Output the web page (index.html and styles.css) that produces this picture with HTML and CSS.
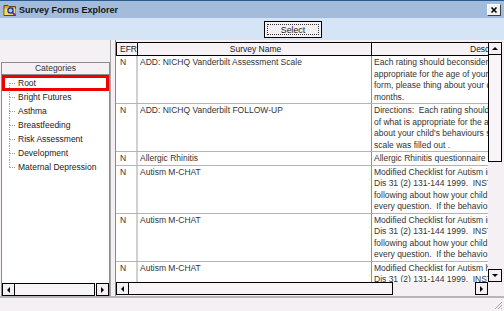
FILE: index.html
```html
<!DOCTYPE html>
<html>
<head>
<meta charset="utf-8">
<link rel="stylesheet" href="styles.css">
</head>
<body>
<div class="window">
  <div class="titlebar">
    <svg class="title-icon" width="14" height="14" viewBox="0 0 14 14">
      <path d="M1 2.5h4l1 1h6.5v9H1z" fill="#d9a826" stroke="#5a4a10" stroke-width="1"/>
      <path d="M1.5 5.5h11v6.5h-11z" fill="#f6dc70"/>
      <circle cx="7.5" cy="7.5" r="2.6" fill="#9cc4f4" stroke="#1c2c8c" stroke-width="1.2"/>
      <path d="M9.4 9.4l3.2 3.2" stroke="#6a2aa8" stroke-width="2"/>
    </svg>
    <span class="title">Survey Forms Explorer</span>
    <span class="close-btn">
      <svg width="8" height="8" viewBox="0 0 8 8"><path d="M1.5 1.5l5 5M6.5 1.5l-5 5" stroke="#000" stroke-width="1.6"/></svg>
    </span>
  </div>
  <div class="toolbar">
    <div class="select-btn"><span class="focus">Select</span></div>
  </div>
  <div class="main">
    <div class="left">
      <div class="cat-panel">
        <div class="cat-head">Categories</div>
        <div class="tree">
          <div class="tree-item root first"><span class="conn"><i></i><i></i></span>Root</div>
          <div class="tree-item"><span class="conn"><i></i><i></i></span>Bright Futures</div>
          <div class="tree-item"><span class="conn"><i></i><i></i></span>Asthma</div>
          <div class="tree-item"><span class="conn"><i></i><i></i></span>Breastfeeding</div>
          <div class="tree-item"><span class="conn"><i></i><i></i></span>Risk Assessment</div>
          <div class="tree-item"><span class="conn"><i></i><i></i></span>Development</div>
          <div class="tree-item last"><span class="conn"><i></i><i></i></span>Maternal Depression</div>
        </div>
        <div class="hscroll small">
          <span class="sbtn arr-left"></span>
          <span class="thumb"></span>
          <span class="track"></span>
          <span class="sbtn arr-right"></span>
        </div>
      </div>
    </div>
    <div class="splitter"></div>
    <div class="right">
      <div class="grid-top">
        <div class="table">
          <div class="row head">
            <div class="cell c1">EFR</div>
            <div class="cell c2">Survey Name</div>
            <div class="cell c3"><span class="desc-head">Description</span></div>
          </div>
          <div class="row l4">
            <div class="cell c1">N</div>
            <div class="cell c2">ADD: NICHQ Vanderbilt Assessment Scale</div>
            <div class="cell c3">Each rating should beconsidered in the context of what is<br>appropriate for the age of your child. When completing this<br>form, please thing about your child's behaviors in the past 6<br>months.</div>
          </div>
          <div class="row l4">
            <div class="cell c1">N</div>
            <div class="cell c2">ADD: NICHQ Vanderbilt FOLLOW-UP</div>
            <div class="cell c3">Directions:&nbsp; Each rating should be considered in the context<br>of what is appropriate for the age of your child. Please think<br>about your child's behaviours since the last assessment<br>scale was filled out .</div>
          </div>
          <div class="row">
            <div class="cell c1">N</div>
            <div class="cell c2">Allergic Rhinitis</div>
            <div class="cell c3">Allergic Rhinitis questionnaire</div>
          </div>
          <div class="row l4">
            <div class="cell c1">N</div>
            <div class="cell c2">Autism M-CHAT</div>
            <div class="cell c3">Modified Checklist for Autism in Toddlers. J Autism Dev<br>Dis 31 (2) 131-144 1999.&nbsp; INSTRUCTIONS: Please fill out the<br>following about how your child usually is. Please try to answer<br>every question.&nbsp; If the behavior is rare, answer as if no.</div>
          </div>
          <div class="row l4">
            <div class="cell c1">N</div>
            <div class="cell c2">Autism M-CHAT</div>
            <div class="cell c3">Modified Checklist for Autism in Toddlers. J Autism Dev<br>Dis 31 (2) 131-144 1999.&nbsp; INSTRUCTIONS: Please fill out the<br>following about how your child usually is. Please try to answer<br>every question.&nbsp; If the behavior is rare, answer as if no.</div>
          </div>
          <div class="row l4">
            <div class="cell c1">N</div>
            <div class="cell c2">Autism M-CHAT</div>
            <div class="cell c3">Modified Checklist for Autism h Toddlers. J Autism Dev<br>Dis 31 (2) 131-144 1999.&nbsp; INSTRUCTIONS: Please fill out the<br>following about how your child usually is.<br>every question.</div>
          </div>
        </div>
        <div class="vscroll">
          <span class="sbtn arr-up"></span>
          <span class="thumb"></span>
          <span class="track"></span>
          <span class="sbtn arr-down"></span>
        </div>
      </div>
      <div class="hscroll big">
        <span class="sbtn arr-left"></span>
        <span class="thumb"></span>
        <span class="track"></span>
        <span class="sbtn arr-right"></span>
        <span class="corner"></span>
      </div>
    </div>
  </div>
  <div class="status">
    <svg class="grip" width="10" height="10" viewBox="0 0 10 10">
      <path d="M9 2L2 9M9 5L5 9M9 8L8 9" stroke="#a8a4a8" stroke-width="1"/>
    </svg>
  </div>
</div>
</body>
</html>
```
FILE: styles.css
```css
* { box-sizing: border-box; margin: 0; padding: 0; }
html, body { width: 504px; height: 311px; overflow: hidden; }
body {
  font-family: "Liberation Sans", Arial, sans-serif;
  font-size: 8.5px;
  color: #222;
  background: #f4f0f4;
}
.window {
  width: 504px;
  height: 311px;
  display: flex;
  flex-direction: column;
  border-top: 1px solid #2b5a8f;
}
.titlebar {
  height: 17px;
  flex: none;
  background: #a3bcdc;
  display: flex;
  align-items: center;
  padding: 0 2px 0 3px;
}
.title-icon { flex: none; margin-right: 2px; }
.title {
  flex: 1;
  font-weight: bold;
  font-size: 9px;
  color: #141414;
}
.close-btn {
  width: 14px;
  height: 12px;
  margin-right: 1px;
  background: #f2f2f2;
  border: 1px solid;
  border-color: #ffffff #404040 #404040 #ffffff;
  display: flex;
  align-items: center;
  justify-content: center;
}
.toolbar {
  height: 22px;
  flex: none;
  background: #d6e5f5;
  padding: 3px 0 0 264px;
}
.select-btn {
  width: 58px;
  height: 17px;
  border: 1px solid #000;
  background: #f4f0f4;
  padding: 2px;
}
.select-btn .focus {
  display: flex;
  height: 100%;
  align-items: center;
  justify-content: center;
  border: 1px dotted #333;
  font-size: 8.8px;
  color: #222;
}
.main {
  flex: 1;
  display: flex;
  min-height: 0;
}
.left {
  width: 110px;
  flex: none;
  padding: 22px 0 0 1px;
  display: flex;
}
.cat-panel {
  flex: 1;
  border: 1px solid #8c8c8c;
  border-bottom: none;
  display: flex;
  flex-direction: column;
}
.cat-head {
  height: 12px;
  flex: none;
  background: #f4f0f4;
  border-bottom: 1px solid #8c8c8c;
  text-align: center;
  line-height: 11px;
  color: #333;
}
.tree {
  flex: 1;
  background: #fff;
  padding-top: 1px;
}
.tree-item {
  height: 14px;
  margin: 0 1px 0 1px;
  display: flex;
  align-items: center;
  color: #222;
}
.tree-item.root {
  outline: 3px solid #ee0000;
  outline-offset: -2px;
}
.conn {
  width: 15px;
  height: 14px;
  flex: none;
  padding-left: 6px;
  display: flex;
  flex-direction: column;
}
.conn i {
  flex: 1;
  width: 6px;
  border-left: 1px dotted #a0a0a0;
}
.conn i + i { border-top: 1px dotted #a0a0a0; }
.tree-item.first .conn i:first-child { border-left-color: transparent; }
.tree-item.last .conn i + i { border-left-color: transparent; }

.splitter {
  width: 5px;
  flex: none;
  border-left: 1px solid #a8a8a8;
}
.right {
  flex: 1;
  display: flex;
  flex-direction: column;
  padding: 2px 2px 1px 0;
  border-left: 1px solid #8a8a8a;
  min-width: 0;
}
.grid-top {
  flex: 1;
  display: flex;
  min-height: 0;
  overflow: hidden;
}
.table {
  width: 372px;
  flex: none;
  overflow: hidden;
  background: #fff;
}
.row {
  display: grid;
  grid-template-columns: 22px 234px 116px;
  border-bottom: 1px solid #b4b4b4;
  line-height: 11.5px;
}
.row.head {
  background: #f6f2f6;
  height: 14px;
  border-top: 1px solid #000;
  border-bottom: 1px solid #000;
  line-height: 12px;
}
.cell {
  padding: 1px 0 0 2px;
  white-space: nowrap;
  overflow: hidden;
  color: #333;
}
.row .c1 { padding-left: 4px; border-right: 2px solid #d0d0d0; }
.row .c2 { border-right: 1px solid #909090; }
.row.head .cell { padding-top: 0; color: #222; }
.row.head .c1 { border-left: 1px solid #000; border-right: 1px solid #000; padding-left: 3px; }
.row.head .c2 { border-right: 1px solid #000; text-align: center; }
.row.head .c3 { padding-left: 98px; }

.vscroll {
  width: 14px;
  flex: none;
  display: flex;
  flex-direction: column;
  background: #f4f0f4;
}
.sbtn {
  flex: none;
  border: 1px solid #000;
  background: #f4f0f4;
  display: flex;
  align-items: center;
  justify-content: center;
}
.sbtn::before {
  content: "";
  width: 0;
  height: 0;
  border: 3px solid transparent;
}
.vscroll .sbtn { height: 13px; }
.arr-up::before { border-bottom: 3px solid #000; border-top-width: 0; }
.arr-down::before { border-top: 3px solid #000; border-bottom-width: 0; }
.arr-left::before { border-right: 3px solid #000; border-left-width: 0; }
.arr-right::before { border-left: 3px solid #000; border-right-width: 0; }
.thumb {
  flex: none;
  border: 1px solid #000;
  background: #f8f4f8;
}
.vscroll .thumb { height: 108px; margin-top: -1px; }
.track { flex: 1; }

.hscroll {
  height: 13px;
  flex: none;
  display: flex;
  background: #f4f0f4;
}
.hscroll .sbtn { width: 13px; }
.hscroll.small .thumb { width: 81px; margin-left: -1px; }
.hscroll.big .sbtn { width: 13px; }
.hscroll.big .thumb { width: 265px; margin-left: -1px; }
.corner { width: 14px; flex: none; }

.status {
  height: 15px;
  flex: none;
  border-top: 2px solid #b8b4b8;
  background: #f4f0f4;
  display: flex;
  justify-content: flex-end;
  align-items: flex-end;
  padding: 0 1px 1px 0;
}
```
